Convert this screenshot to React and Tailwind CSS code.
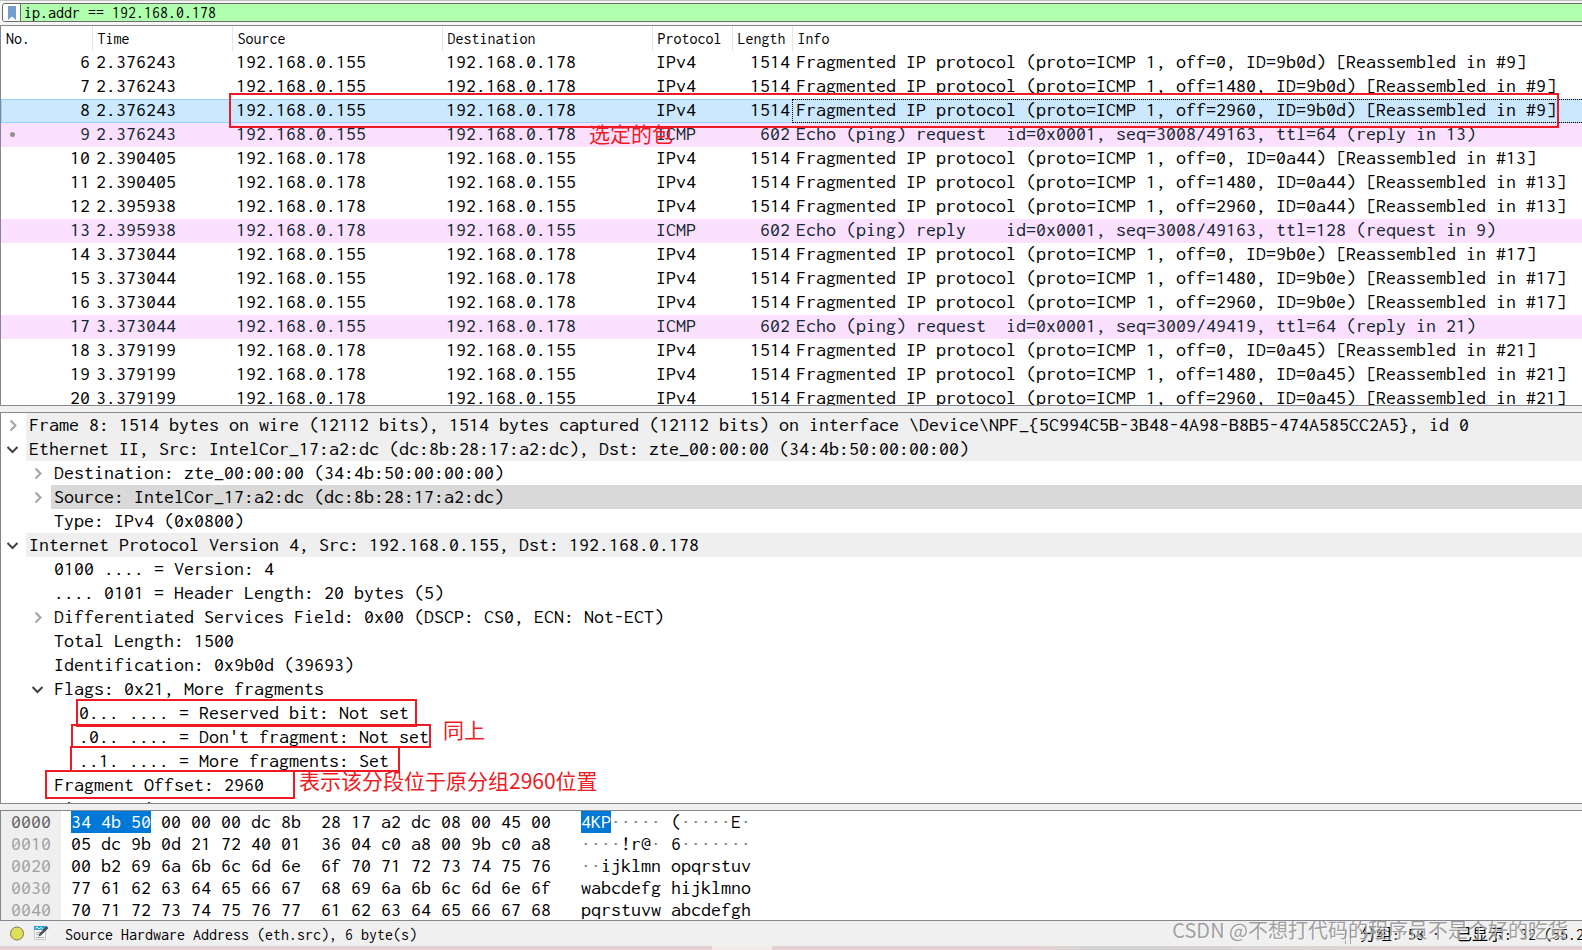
import React from "react";

const frag = (off, id, n) =>
  `Fragmented IP protocol (proto=ICMP 1, off=${off}, ID=${id}) [Reassembled in #${n}]`;
const A = "192.168.0.155";
const B = "192.168.0.178";

const packets = [
  [6, "2.376243", A, B, "IPv4", 1514, frag(0, "9b0d", 9)],
  [7, "2.376243", A, B, "IPv4", 1514, frag(1480, "9b0d", 9)],
  [8, "2.376243", A, B, "IPv4", 1514, frag(2960, "9b0d", 9)],
  [9, "2.376243", A, B, "ICMP", 602, "Echo (ping) request  id=0x0001, seq=3008/49163, ttl=64 (reply in 13)"],
  [10, "2.390405", B, A, "IPv4", 1514, frag(0, "0a44", 13)],
  [11, "2.390405", B, A, "IPv4", 1514, frag(1480, "0a44", 13)],
  [12, "2.395938", B, A, "IPv4", 1514, frag(2960, "0a44", 13)],
  [13, "2.395938", B, A, "ICMP", 602, "Echo (ping) reply    id=0x0001, seq=3008/49163, ttl=128 (request in 9)"],
  [14, "3.373044", A, B, "IPv4", 1514, frag(0, "9b0e", 17)],
  [15, "3.373044", A, B, "IPv4", 1514, frag(1480, "9b0e", 17)],
  [16, "3.373044", A, B, "IPv4", 1514, frag(2960, "9b0e", 17)],
  [17, "3.373044", A, B, "ICMP", 602, "Echo (ping) request  id=0x0001, seq=3009/49419, ttl=64 (reply in 21)"],
  [18, "3.379199", B, A, "IPv4", 1514, frag(0, "0a45", 21)],
  [19, "3.379199", B, A, "IPv4", 1514, frag(1480, "0a45", 21)],
  [20, "3.379199", B, A, "IPv4", 1514, frag(2960, "0a45", 21)],
];

const headings = ["No.", "Time", "Source", "Destination", "Protocol", "Length", "Info"];

const details = [
  [0, "closed", "Frame 8: 1514 bytes on wire (12112 bits), 1514 bytes captured (12112 bits) on interface \\Device\\NPF_{5C994C5B-3B48-4A98-B8B5-474A585CC2A5}, id 0", "bg-[#efefef]"],
  [0, "open", "Ethernet II, Src: IntelCor_17:a2:dc (dc:8b:28:17:a2:dc), Dst: zte_00:00:00 (34:4b:50:00:00:00)", "bg-[#efefef]"],
  [1, "closed", "Destination: zte_00:00:00 (34:4b:50:00:00:00)", ""],
  [1, "closed", "Source: IntelCor_17:a2:dc (dc:8b:28:17:a2:dc)", "bg-[#d9d9d9]"],
  [1, "", "Type: IPv4 (0x0800)", ""],
  [0, "open", "Internet Protocol Version 4, Src: 192.168.0.155, Dst: 192.168.0.178", "bg-[#efefef]"],
  [1, "", "0100 .... = Version: 4", ""],
  [1, "", ".... 0101 = Header Length: 20 bytes (5)", ""],
  [1, "closed", "Differentiated Services Field: 0x00 (DSCP: CS0, ECN: Not-ECT)", ""],
  [1, "", "Total Length: 1500", ""],
  [1, "", "Identification: 0x9b0d (39693)", ""],
  [1, "open", "Flags: 0x21, More fragments", ""],
  [2, "", "0... .... = Reserved bit: Not set", ""],
  [2, "", ".0.. .... = Don't fragment: Not set", ""],
  [2, "", "..1. .... = More fragments: Set", ""],
  [1, "", "Fragment Offset: 2960", ""],
  [1, "", "Time to Live: 64", ""],
];
const indents = ["pl-0", "pl-[25px]", "pl-[50px]"];

const bytes = [
  ["0000", "34 4b 50", " 00 00 00 dc 8b  28 17 a2 dc 08 00 45 00", "4KP", "····· (·····E·"],
  ["0010", "", "05 dc 9b 0d 21 72 40 01  36 04 c0 a8 00 9b c0 a8", "", "····!r@· 6·······"],
  ["0020", "", "00 b2 69 6a 6b 6c 6d 6e  6f 70 71 72 73 74 75 76", "", "··ijklmn opqrstuv"],
  ["0030", "", "77 61 62 63 64 65 66 67  68 69 6a 6b 6c 6d 6e 6f", "", "wabcdefg hijklmno"],
  ["0040", "", "70 71 72 73 74 75 76 77  61 62 63 64 65 66 67 68", "", "pqrstuvw abcdefgh"],
];

function Chevron({ state }) {
  if (!state) return <span className="w-[25px] shrink-0" />;
  const open = state === "open";
  return (
    <button
      type="button"
      aria-label={open ? "Collapse" : "Expand"}
      className="flex w-[25px] shrink-0 items-center pl-[5px]"
    >
      <svg width="13" height="13" viewBox="0 0 13 13" fill="none" strokeWidth="2">
        {open ? (
          <path d="M1.5 4 L6.5 9 L11.5 4" stroke="#404040" />
        ) : (
          <path d="M4.5 1.5 L9.5 6.5 L4.5 11.5" stroke="#a3a3a3" />
        )}
      </svg>
    </button>
  );
}

function FilterBar() {
  return (
    <div className="border-t border-[#c0c0c0] bg-[#f5f5f5] px-[2px] pt-[2px] pb-[3px]">
      <div className="-mr-[6px] flex h-[19px] overflow-hidden rounded-[3px] border border-[#6b6b6b] bg-[#afffaf]">
        <button
          type="button"
          aria-label="Filter bookmarks"
          className="flex w-[18px] shrink-0 items-center justify-center border-r border-[#6b6b6b] bg-white"
        >
          <svg width="8" height="14" viewBox="0 0 8 14">
            <path d="M0 0 H8 V14 L4 10.5 L0 14 Z" fill="#729fcf" />
          </svg>
        </button>
        <label htmlFor="filter" className="sr-only">Display filter</label>
        <input
          id="filter"
          defaultValue="ip.addr == 192.168.0.178"
          className="min-w-0 flex-1 bg-transparent px-[3px] text-[16px] leading-[17px] outline-none"
        />
      </div>
    </div>
  );
}

function PacketRow({ packet }) {
  const [no, time, source, destination, protocol, length, info] = packet;
  const selected = no === 8;
  const tone = selected
    ? "bg-[#cce8ff] shadow-[inset_0_0_0_1px_#99d1ff]"
    : protocol === "ICMP"
      ? "bg-[#fce0ff] text-[#12272e]"
      : "";
  return (
    <tr className={`h-6 align-top ${tone}`}>
      <td className="pr-[2px] text-right">
        <div className="flex items-center justify-end">
          {no === 9 && <span className="mr-auto ml-[9px] size-[5px] rounded-full bg-[#8f8f96]" />}
          {no}
        </div>
      </td>
      <td className="pl-1">{time}</td>
      <td className="pl-1">{source}</td>
      <td className="pl-1">{destination}</td>
      <td className="pl-1">{protocol}</td>
      <td className="pr-[2px] text-right">{length}</td>
      <td className={selected ? "pl-1 outline-1 -outline-offset-1 outline-dotted outline-black" : "pl-1"}>{info}</td>
    </tr>
  );
}

function PacketList() {
  return (
    <section className="min-h-0 flex-[381_1_0%] overflow-hidden border-y border-l border-[#828790] bg-white">
      <table className="w-[calc(100%+4px)] table-fixed border-collapse text-[20px] leading-[22px] whitespace-pre">
        <colgroup>
          <col className="w-[91px]" />
          <col className="w-[140px]" />
          <col className="w-[210px]" />
          <col className="w-[210px]" />
          <col className="w-[80px]" />
          <col className="w-[60px]" />
          <col />
        </colgroup>
        <thead>
          <tr className="h-[25px]">
            {headings.map((h) => (
              <th
                key={h}
                scope="col"
                className="border-r border-[#e5e5e5] p-0 pl-[5px] text-left text-[16px] leading-6 font-normal last:border-r-0"
              >
                {h}
              </th>
            ))}
          </tr>
        </thead>
        <tbody>
          {packets.map((p) => (
            <PacketRow key={p[0]} packet={p} />
          ))}
        </tbody>
      </table>
    </section>
  );
}

function PacketDetails() {
  return (
    <section className="min-h-0 flex-[392_1_0%] overflow-hidden border-y border-l border-[#828790] bg-white">
      <ul className="text-[20px] leading-6 whitespace-pre">
        {details.map(([level, state, text, tone]) => (
          <li key={text} className={`flex h-6 ${indents[level]}`}>
            <Chevron state={state} />
            <span className={`flex-1 pl-[3px] ${tone}`}>{text}</span>
          </li>
        ))}
      </ul>
    </section>
  );
}

function Ascii({ text }) {
  return text.split(/(·+)/).map((part, i) => (
    <span key={i} className={part.startsWith("·") ? "text-[#808080]" : ""}>{part}</span>
  ));
}

function PacketBytes() {
  return (
    <section className="h-[111px] shrink-0 overflow-hidden border-y border-l border-[#828790] bg-white">
      <table className="w-full table-fixed border-collapse text-[20px] leading-[22px] whitespace-pre">
        <colgroup>
          <col className="w-[60px]" />
          <col className="w-[520px]" />
          <col />
        </colgroup>
        <tbody>
          {bytes.map(([offset, selHex, hex, selText, text]) => (
            <tr key={offset} className="h-[22px]">
              <th
                scope="row"
                className={`bg-[#efefef] p-0 pl-[10px] text-left font-normal ${selHex ? "text-[#606060]" : "text-[#a0a0a0]"}`}
              >
                {offset}
              </th>
              <td className="p-0 pl-[10px]">
                {selHex && <span className="inline-block h-[22px] bg-[#0078d7] align-top text-white">{selHex}</span>}
                {hex}
              </td>
              <td className="p-0">
                {selText && <span className="inline-block h-[22px] bg-[#0078d7] align-top text-white">{selText}</span>}
                <Ascii text={text} />
              </td>
            </tr>
          ))}
        </tbody>
      </table>
    </section>
  );
}

function StatusBar() {
  return (
    <footer className="flex h-[25px] shrink-0 items-center overflow-hidden text-[16px] leading-6 whitespace-pre">
      <button type="button" aria-label="Expert information" className="ml-[9px]">
        <svg width="16" height="16" viewBox="0 0 16 16">
          <circle cx="8" cy="7.5" r="6.5" fill="#dede58" stroke="#7d7d4a" />
        </svg>
      </button>
      <button type="button" aria-label="Capture file comment" className="ml-[8px]">
        <svg width="16" height="16" viewBox="0 0 16 16">
          <path d="M1.5 0.5 H12.5 V13.5 H1.5 Z" fill="#f8f8f8" stroke="#c4c8cc" />
          <path d="M1 0 H13 V4 H1 Z" fill="#2ba0d4" />
          <path d="M2 2.5 L4 1 L6 3 L8 1.5 L10 3" stroke="#d8eef8" fill="none" />
          <path d="M3 6.5 H8 M3 8.5 H6 M3 11.5 H11" stroke="#a9aeb2" />
          <path d="M13.5 0 L15.5 2 L8 9.5 L5.5 10.5 L6.3 7.8 Z" fill="#4a4f54" />
        </svg>
      </button>
      <span className="ml-[16px] pt-[2px]">Source Hardware Address (eth.src), 6 byte(s)</span>
      <span className="mt-1 ml-auto flex h-4 w-[6px] shrink-0 border-x border-[#a8a8a8]" />
      <span className="w-[231px] shrink-0 overflow-hidden pt-[2px] pl-[9px]">分组: 58 ·  已显示: 32 (55.2%)</span>
    </footer>
  );
}

function Note({ className, children }) {
  return (
    <span className={`pointer-events-none absolute font-['Noto_Sans_CJK_SC',sans-serif] text-[21px] leading-6 whitespace-nowrap text-[#ed1c24] ${className}`}>
      {children}
    </span>
  );
}

function Frame({ className }) {
  return <div className={`pointer-events-none absolute border-2 border-[#ed1c24] ${className}`} />;
}

export default function App() {
  return (
    <main className="relative flex h-screen flex-col overflow-hidden bg-[#f0f0f0] font-['Inconsolata','DejaVu_Sans_Mono','Noto_Sans_CJK_SC',monospace] text-black">
      <FilterBar />
      <div className="flex min-h-0 flex-1 flex-col gap-[6px]">
        <PacketList />
        <PacketDetails />
        <PacketBytes />
      </div>
      <StatusBar />
      <div className="flex h-1 shrink-0 bg-linear-to-r from-[#e4d2d2] from-65% via-[#d4d4d4] via-70% to-[#e4d2d2] to-95%">
        <span className="ml-[45%] w-[60px] bg-[#f3eaea]" />
      </div>

      <Frame className="top-[93px] left-[229px] h-[35px] w-[1330px]" />
      <Note className="top-[121px] left-[589px]">选定的包</Note>
      <Frame className="top-[699px] left-[76px] h-[28px] w-[341px]" />
      <Frame className="top-[724px] left-[71px] h-[24px] w-[360px]" />
      <Frame className="top-[746px] left-[70px] h-[26px] w-[330px]" />
      <Frame className="top-[770px] left-[45px] h-[29px] w-[250px]" />
      <Note className="top-[717px] left-[443px]">同上</Note>
      <Note className="top-[768px] left-[299px]">表示该分段位于原分组2960位置</Note>
      <span className="pointer-events-none absolute right-[14px] bottom-[8px] font-['Noto_Sans_CJK_SC',sans-serif] text-[20px] leading-6 whitespace-nowrap text-[#8a8a8a]/80 [text-shadow:1px_1px_0_#ffffffaa]">
        CSDN @不想打代码的程序员不是个好的吃货
      </span>
    </main>
  );
}
